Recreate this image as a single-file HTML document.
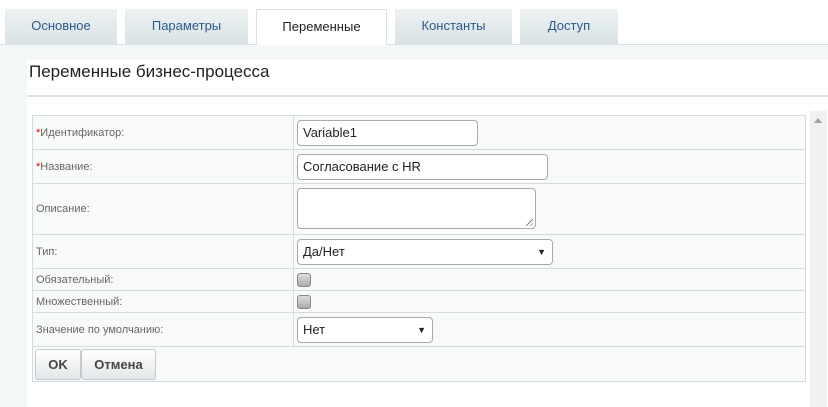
<!DOCTYPE html>
<html><head><meta charset="utf-8"><style>
*{box-sizing:border-box;margin:0;padding:0}
body{width:828px;height:407px;background:#fff;font-family:"Liberation Sans",Arial,sans-serif;position:relative;overflow:hidden}
.tab{position:absolute;top:9px;height:35px;background:linear-gradient(#eef2f3,#d9e2e5);color:#2b5a8a;font-size:13px;text-align:center;line-height:33px}
.tab.act{background:#fff;color:#222;height:36px;border:1px solid #d9e3e5;border-bottom:none}
.bar{position:absolute;top:44px;left:0;width:828px;height:363px;background:#f3f7f8;border-top:1px solid #d6e0e3}
.white{position:absolute;left:27px;top:60px;width:801px;height:347px;background:#fff}
h1{position:absolute;left:29px;top:62px;font-size:17px;font-weight:normal;color:#222}
.hr{position:absolute;left:27px;top:95px;width:801px;height:2px;background:#e0e0e0}
.scroll{position:absolute;left:810px;top:111px;width:17px;height:296px;background:#f0f0f0}
.scroll:after{content:"";position:absolute;left:4px;top:7px;border:4px solid transparent;border-bottom:5px solid #a0a0a0;border-top:none}
table{position:absolute;left:32px;top:115px;width:774px;border-collapse:collapse;background:#f8fafa}
td{border:1px solid #d3dbe3;font-size:11px;color:#666;padding:0 0 0 3px;position:relative}
td.l{width:261px}
.r{color:#d00}
.in{position:absolute;left:3px;border:1px solid #a9a9a9;border-radius:4px;background:#fff;font-size:13px;color:#222;padding-left:5px;line-height:24px}
.sel:after{content:"▼";position:absolute;right:6px;top:0;font-size:9px;color:#222}
.grip{position:absolute;right:2px;bottom:2px;width:7px;height:7px;background:linear-gradient(135deg,transparent 45%,#888 45%,#888 55%,transparent 55%,transparent 75%,#888 75%,#888 85%,transparent 85%)}
.cb{position:absolute;left:3px;width:14px;height:14px;border:1px solid #888;border-radius:3px;background:linear-gradient(#ddd,#aaa)}
.btn{position:absolute;top:349px;height:31px;border:1px solid #c5c9cc;border-radius:3px;background:linear-gradient(#fff,#e3e6e8);font-size:13px;font-weight:bold;color:#444;text-align:center;line-height:29px}
</style></head><body>
<div class="bar"></div>
<div class="tab" style="left:5px;width:112px">Основное</div>
<div class="tab" style="left:125px;width:123px">Параметры</div>
<div class="tab act" style="left:256px;width:131px">Переменные</div>
<div class="tab" style="left:395px;width:117px">Константы</div>
<div class="tab" style="left:520px;width:98px">Доступ</div>
<div class="white"></div>
<h1>Переменные бизнес-процесса</h1>
<div class="hr"></div>
<div class="scroll"></div>
<table>
<tr style="height:34px"><td class="l"><span class="r">*</span>Идентификатор:</td><td><div class="in" style="top:4px;width:181px;height:26px">Variable1</div></td></tr>
<tr style="height:34px"><td class="l"><span class="r">*</span>Название:</td><td><div class="in" style="top:4px;width:251px;height:26px">Согласование с HR</div></td></tr>
<tr style="height:51px"><td class="l">Описание:</td><td><div class="in" style="top:4px;width:239px;height:41px"><div class="grip"></div></div></td></tr>
<tr style="height:34px"><td class="l">Тип:</td><td><div class="in sel" style="top:4px;width:256px;height:26px">Да/Нет</div></td></tr>
<tr style="height:22px"><td class="l">Обязательный:</td><td><div class="cb" style="top:4px"></div></td></tr>
<tr style="height:22px"><td class="l">Множественный:</td><td><div class="cb" style="top:4px"></div></td></tr>
<tr style="height:34px"><td class="l">Значение по умолчанию:</td><td><div class="in sel" style="top:4px;width:136px;height:26px">Нет</div></td></tr>
<tr style="height:35px"><td colspan="2"></td></tr>
</table>
<div class="btn" style="left:35px;width:46px">OK</div>
<div class="btn" style="left:81px;width:75px">Отмена</div>
</body></html>
